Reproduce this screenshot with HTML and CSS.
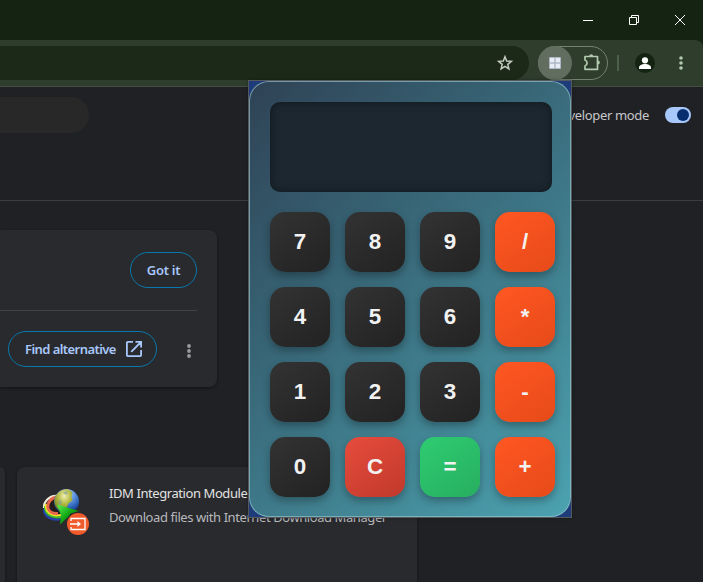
FILE: index.html
```html
<!DOCTYPE html>
<html lang="en">
<head>
<meta charset="utf-8">
<title>Extensions</title>
<link rel="stylesheet" href="styles.css">
</head>
<body>
<div class="browser">
  <header class="titlebar">
    <svg class="win" viewBox="0 0 12 12"><path d="M1 6.500h10"/></svg>
    <svg class="win" viewBox="0 0 12 12"><path d="M1.500 3.500h7v7h-7zM3.500 3.500v-2h7v7h-2"/></svg>
    <svg class="win" viewBox="0 0 12 12"><path d="M1 1l10 10M11 1L1 11"/></svg>
  </header>
  <div class="toolbar">
    <div class="address">
      <svg class="star" viewBox="0 0 16 16"><path d="M8 1.700l1.700 4.300 4.600.35-3.500 3 1.100 4.500L8 11.400l-3.900 2.450 1.100-4.500-3.500-3L6.300 6z"/></svg>
    </div>
    <div class="ext-pill">
      <span class="ext-active">
        <svg width="12" height="12" viewBox="0 0 12 12"><rect width="12" height="12" rx="1" fill="#aeb6c5"/><path fill="#e8edf5" d="M1 1h4.300v4.300H1zM6.700 1H11v4.300H6.700zM1 6.700h4.300V11H1zM6.700 6.700H11V11H6.700z"/></svg>
      </span>
      <svg class="puzzle" viewBox="0 0 18 18"><path d="M2 3.500h12.500v12.800H2v-3.300a3.200 3.200 0 0 0 0-6z"/><path class="knob" d="M6.200 3.200a2 2 0 0 1 4 0zM14.800 7.600a2 2 0 0 1 0 4z"/></svg>
    </div>
    <span class="bar"></span>
    <span class="avatar"><svg width="20" height="20" viewBox="0 0 20 20"><circle cx="10" cy="7.300" r="3.100"/><path d="M4 16v-1.200c0-5 12-5 12 0V16z"/></svg></span>
    <svg class="dots green" viewBox="0 0 4 16"><circle cx="2" cy="3" r="1.800"/><circle cx="2" cy="8" r="1.800"/><circle cx="2" cy="13" r="1.800"/></svg>
  </div>
  <main class="page">
    <div class="page-head">
      <div class="search"></div>
      <span class="dev">Developer mode</span>
      <span class="toggle"><i></i></span>
    </div>
    <section class="review">
      <div class="review-row first"><button class="pill"><span class="got">Got it</span></button></div>
      <div class="review-row second">
        <button class="pill find"><span class="alt">Find alternative</span>
          <svg width="16" height="16" viewBox="0 0 16 16"><path d="M7 .9H1.800Q.9.900.9 1.800v12.400q0 .9.900.9h12.400q.9 0 .9-.9V9M9.500.9h5.600v5.600M15 1L5.200 10.800"/></svg>
        </button>
        <svg class="dots grey" viewBox="0 0 4 16"><circle cx="2" cy="3" r="1.900"/><circle cx="2" cy="8" r="1.900"/><circle cx="2" cy="13" r="1.900"/></svg>
      </div>
    </section>
    <section class="cards">
      <article class="card edge"></article>
      <article class="card">
        <div class="logo">
          <svg width="50" height="50" viewBox="0 0 50 50">
            <defs>
              <radialGradient id="globe" cx=".5" cy=".2" r=".8"><stop offset="0" stop-color="#cfe2fb"/><stop offset=".35" stop-color="#6a9ee8"/><stop offset=".75" stop-color="#2558b0"/><stop offset="1" stop-color="#10275c"/></radialGradient>
              <radialGradient id="land" cx=".55" cy=".3" r=".75"><stop offset="0" stop-color="#f0eeb4"/><stop offset=".45" stop-color="#b7bd45"/><stop offset="1" stop-color="#66761b"/></radialGradient>
              <linearGradient id="arrow" x2="1" y2="1"><stop offset="0" stop-color="#5cf052"/><stop offset=".5" stop-color="#11a514"/><stop offset="1" stop-color="#045407"/></linearGradient>
            </defs>
            <ellipse cx="15.500" cy="20" rx="8" ry="9.500" fill="#241b1c"/>
            <g fill="none" stroke-width="2.200">
              <path stroke="#f4eddc" d="M17 9C9 8 2.500 14 3 21"/>
              <path stroke="#2243b0" d="M3 22c0 8 8 12 17 10"/>
              <path stroke="#41bd31" d="M4 19c0 9 7 12.500 16 11"/>
              <path stroke="#f2e228" d="M5 17c-1 8 5 13 15 11"/>
              <path stroke="#e9664e" stroke-width="3" d="M18 10.500C11 9.500 6 15 7 21c1 4 5 6 10 5.500"/>
            </g>
            <circle cx="25.500" cy="14.500" r="12.500" fill="url(#globe)"/>
            <path d="M13.500 12c1.500-6 8-10.500 14-9.500l4 3-1 4 1 4-4 3-2 5-5 3c-5-2-8-7-7-12.500z" fill="url(#land)"/>
            <path d="M22 6l3-2 2 2-2 2zM17 14l3-1 1 3-2 2z" fill="#80a1a5" opacity=".65"/>
            <path d="M16 17.500l22 6.500-8.500 2.500-2 3-8.500 8 1-9z" fill="url(#arrow)"/>
          </svg>
          <span class="badge"><svg width="16" height="14" viewBox="0 0 16 14"><path d="M1 4V1.500h14v11H1V10M0 7h9.500"/><path class="tip" d="M7.500 4l3.500 3-3.500 3z"/></svg></span>
        </div>
        <div class="info"><h2>IDM Integration Module</h2><p>Download files with Internet Download Manager</p></div>
      </article>
    </section>
  </main>
</div>
<div class="popup">
  <div class="calculator">
    <div class="display"></div>
    <div class="keys">
      <button>7</button><button>8</button><button>9</button><button class="op">/</button>
      <button>4</button><button>5</button><button>6</button><button class="op">*</button>
      <button>1</button><button>2</button><button>3</button><button class="op">-</button>
      <button>0</button><button class="clear">C</button><button class="equal">=</button><button class="op">+</button>
    </div>
  </div>
</div>
</body>
</html>
```
FILE: styles.css
```css
* { box-sizing: border-box; }
body { margin: 0; overflow: hidden; font-family: "Noto Sans", sans-serif; font-size: 13px; }
button { font: inherit; margin: 0; }
svg { display: block; flex: none; }
.browser { height: 582px; display: flex; flex-direction: column; background: #152313; overflow: hidden; }
.titlebar { height: 40px; flex: none; display: flex; justify-content: flex-end; align-items: center; gap: 34px; padding-right: 17px; }
.win { width: 12px; height: 12px; fill: none; stroke: #fff; stroke-width: 1; }
.toolbar { height: 47px; flex: none; display: flex; align-items: center; background: #2f3d2d; border-bottom: 1px solid #454d43; border-top-right-radius: 8px; padding-right: 20px; }
.address { width: 529px; height: 34px; background: #1c2919; border-radius: 0 17px 17px 0; display: flex; align-items: center; justify-content: flex-end; padding-right: 16px; }
.star { width: 16px; height: 16px; fill: none; stroke: #c5ccc0; stroke-width: 1.500; }
.ext-pill { width: 70px; height: 34px; margin-left: 9px; border: 1px solid #778074; border-radius: 17px; display: flex; align-items: center; }
.ext-active { width: 34px; height: 34px; margin-left: -1px; border-radius: 50%; background: #616e5f; display: flex; align-items: center; justify-content: center; flex: none; }
.puzzle { width: 18px; height: 18px; margin: -2px 0 0 11px; fill: none; stroke: #b2cbae; stroke-width: 1.700; stroke-linejoin: round; }
.puzzle .knob { fill: #b2cbae; stroke: none; }
.bar { width: 2px; height: 16px; background: #4c604a; margin-left: 9px; }
.avatar { width: 20px; height: 20px; border-radius: 50%; background: #152313; margin-left: 16px; fill: #fff; }
.dots { width: 4px; height: 16px; }
.toolbar .dots { margin-left: auto; }
.green { fill: #b2cbae; }
.grey { fill: #9a9b9e; }
.page { flex: 1; background: #202124; overflow: hidden; }
.page-head { height: 114px; border-bottom: 1px solid #3b3c3f; display: flex; align-items: flex-start; padding: 10px 12px 0 0; }
.search { width: 89px; height: 36px; background: #282828; border-radius: 0 18px 18px 0; }
.dev { margin-left: auto; color: #c6c7ca; line-height: 36px; letter-spacing: -.35px; }
.toggle { width: 26px; height: 16px; margin: 10px 0 0 16px; border-radius: 8px; background: #a8c7fa; display: flex; align-items: center; justify-content: flex-end; padding-right: 2px; }
.toggle i { width: 12px; height: 12px; border-radius: 50%; background: #062e6f; }
.review { width: 217px; height: 157px; margin-top: 29px; background: #292a2d; border-radius: 0 8px 8px 0; box-shadow: 0 1px 3px rgba(0,0,0,.45); padding-right: 20px; }
.review-row { display: flex; justify-content: flex-end; align-items: center; }
.first { height: 81px; border-bottom: 1px solid #424346; }
.second { height: 76px; padding-right: 6px; gap: 30px; }
.second .dots { margin-top: 4px; }
.pill { height: 36px; border: 1px solid #0878ae; border-radius: 18px; background: none; color: #a8c7fa; font-weight: 600; padding: 0; width: 67px; display: flex; align-items: center; justify-content: center; white-space: nowrap; }
.find { width: 149px; justify-content: space-between; padding: 0 14px 0 16px; }
.find svg { fill: none; stroke: #a8c7fa; stroke-width: 1.800; }
.got { letter-spacing: -.3px; }
.alt { letter-spacing: -.56px; }
.cards { display: flex; gap: 12px; margin-top: 80px; }
.card { width: 400px; height: 140px; flex: none; background: #292a2d; border-radius: 8px; box-shadow: 0 1px 3px rgba(0,0,0,.45); display: flex; }
.edge { width: 5px; border-radius: 0 5px 5px 0; }
.logo { width: 50px; height: 50px; margin: 20px 0 0 24px; position: relative; }
.badge { position: absolute; left: 26px; top: 26px; width: 22px; height: 22px; border-radius: 50%; background: #f15a2b; display: flex; align-items: center; justify-content: center; }
.badge path { fill: none; stroke: #fff; stroke-width: 1.300; }
.badge .tip { fill: #fff; stroke: none; }
.info { margin: 16px 0 0 18px; white-space: nowrap; }
.info h2, .info p { margin: 0; font-size: 13px; font-weight: 400; line-height: 20px; }
.info h2 { color: #e3e3e3; letter-spacing: -.42px; }
.info p { color: #b8b9bd; margin-top: 4px; letter-spacing: -.42px; }
.popup { position: absolute; left: 248px; top: 80px; width: 324px; height: 438px; border: 1px solid #55585c; background: #1e3c79; box-shadow: 0 0 3px rgba(0,0,0,.35); overflow: hidden; }
.calculator { height: 436px; padding: 20px; border: 1px solid rgba(151,198,204,.65); border-radius: 20px; background: linear-gradient(135deg, #2f4255, #366071 32%, #4ca3b1) border-box; }
.display { width: 282px; height: 90px; background: #1c2730; border-radius: 10px; box-shadow: inset 0 0 10px rgba(0,0,0,.4); }
.keys { display: grid; grid-template-columns: repeat(4, 60px); grid-auto-rows: 60px; gap: 15px; margin-top: 20px; }
.keys button { border: 0; padding: 0; border-radius: 15px; background: linear-gradient(145deg, #333, #222); color: #f2f2f2; font: bold 22.400px "Liberation Sans", sans-serif; box-shadow: 0 4px 8px rgba(0,0,0,.3); }
.keys .op { background: linear-gradient(145deg, #ff5722, #e64a19); }
.keys .clear { background: linear-gradient(145deg, #e74c3c, #c0392b); }
.keys .equal { background: linear-gradient(145deg, #2ecc71, #27ae60); }
```
